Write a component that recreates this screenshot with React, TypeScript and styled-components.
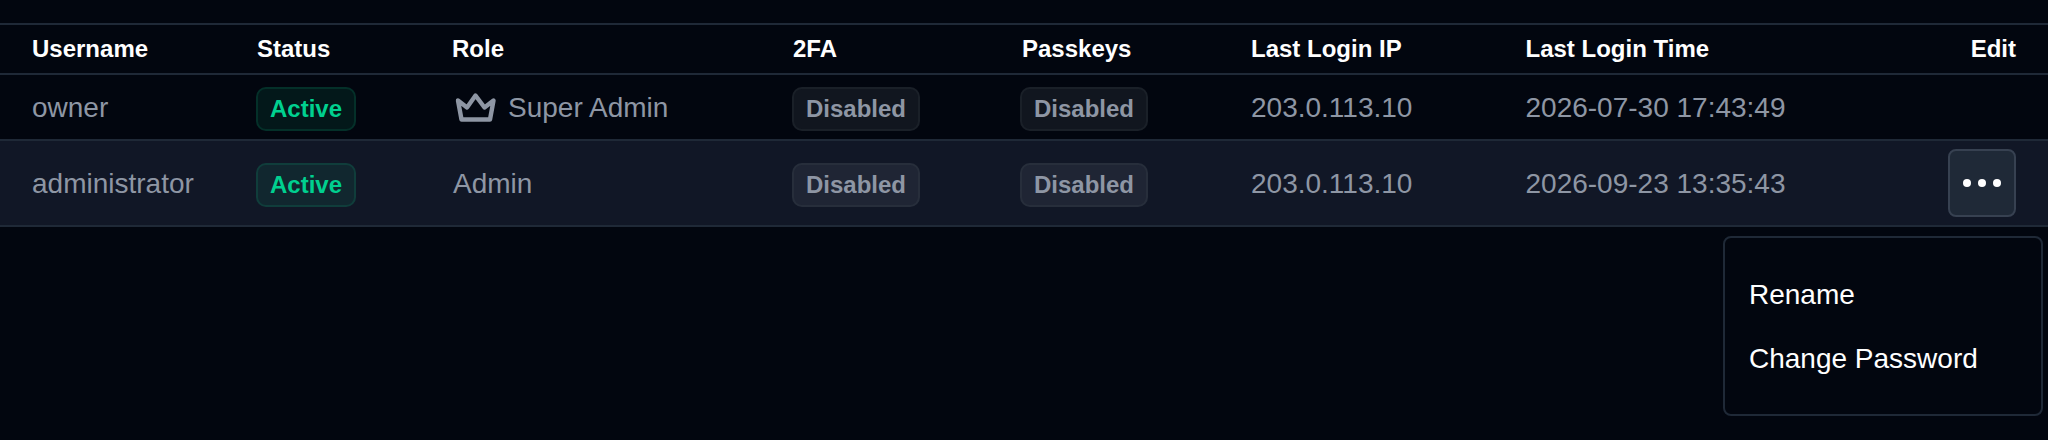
import React from "react";
import styled, { createGlobalStyle } from "styled-components";

const Global = createGlobalStyle`
  html, body { margin: 0; padding: 0; background: #02060f; }
  body { font-family: "Liberation Sans", Arial, sans-serif; }
`;

const Page = styled.div`
  position: relative;
  width: 2048px;
  height: 440px;
  padding-top: 23px;
  box-sizing: border-box;
  background: #02060f;
  overflow: hidden;
`;

const columns = "256px 195px 341px 228px 230px 274.5px 299.5px 1fr";

const Row = styled.div<{ $hl?: boolean; $h: number }>`
  display: grid;
  grid-template-columns: ${columns};
  align-items: center;
  height: ${(p) => p.$h}px;
  box-sizing: border-box;
  border-bottom: 2px solid #1f2937;
  background: ${(p) => (p.$hl ? "#111726" : "transparent")};
`;

const Head = styled(Row)`
  border-top: 2px solid #1f2937;
`;

const Th = styled.div<{ $pad: number; $right?: boolean }>`
  color: #ffffff;
  font-size: 24px;
  font-weight: 700;
  padding-left: ${(p) => p.$pad}px;
  padding-right: ${(p) => (p.$right ? "32px" : "0")};
  text-align: ${(p) => (p.$right ? "right" : "left")};
  white-space: nowrap;
`;

const Td = styled.div<{ $first?: boolean; $right?: boolean; $flush?: boolean }>`
  color: #8e96a4;
  font-size: 28px;
  padding-top: ${(p) => (p.$right ? "0" : "2px")};
  padding-left: ${(p) => (p.$first ? "32px" : p.$flush ? "0" : "1px")};
  padding-right: ${(p) => (p.$right ? "32px" : "0")};
  display: flex;
  align-items: center;
  justify-content: ${(p) => (p.$right ? "flex-end" : "flex-start")};
  white-space: nowrap;
`;

const RoleName = styled.span`
  padding-left: 1px;
`;

const Badge = styled.span<{ $green?: boolean }>`
  display: inline-flex;
  align-items: center;
  justify-content: center;
  height: 44px;
  margin-top: 2px;
  padding: 0 12px;
  box-sizing: border-box;
  border-radius: 10px;
  font-size: 24px;
  font-weight: 700;
  color: ${(p) => (p.$green ? "#00d08f" : "#8e96a4")};
  background: ${(p) => (p.$green ? "rgba(16,185,129,0.1)" : "rgba(156,163,175,0.1)")};
  border: 2px solid ${(p) => (p.$green ? "rgba(16,185,129,0.15)" : "rgba(156,163,175,0.07)")};
`;

const Crown = styled.svg`
  width: 44px;
  height: 44px;
  margin: 0 10px 0 3px;
  color: #8e96a4;
`;

const MoreButton = styled.button`
  width: 68px;
  height: 68px;
  padding: 0;
  display: flex;
  align-items: center;
  justify-content: center;
  gap: 7.2px;
  background: #1f2937;
  border: 2px solid #374151;
  border-radius: 8px;
`;

const Dot = styled.i`
  width: 8px;
  height: 8px;
  border-radius: 50%;
  background: #ffffff;
`;

const Menu = styled.div`
  position: absolute;
  left: 1723px;
  top: 236px;
  width: 320px;
  height: 180px;
  box-sizing: border-box;
  padding: 25px 24px;
  background: #02060f;
  border: 2px solid #1f2937;
  border-radius: 8px;
  display: flex;
  flex-direction: column;
`;

const MenuItem = styled.div`
  color: #ffffff;
  font-size: 28px;
  line-height: 64px;
  white-space: nowrap;
`;

const heads: [string, number][] = [
  ["Username", 32],
  ["Status", 1],
  ["Role", 1],
  ["2FA", 1],
  ["Passkeys", 2],
  ["Last Login IP", 1],
  ["Last Login Time", 1],
];

export default function App() {
  return (
    <>
      <Global />
      <Page>
        <Head $h={52}>
          {heads.map(([h, pad]) => (
            <Th key={h} $pad={pad}>{h}</Th>
          ))}
          <Th $pad={0} $right>Edit</Th>
        </Head>
        <Row $h={66}>
          <Td $first>owner</Td>
          <Td $flush><Badge $green>Active</Badge></Td>
          <Td $flush>
            <Crown viewBox="0 0 44 44" fill="none" stroke="currentColor" strokeWidth="4.4" strokeLinecap="round" strokeLinejoin="round">
              <path d="M21.5 9.5 L30.5 21.5 L39.5 14.5 L36 33.5 L7.5 33.5 L4 14.5 L13 21.5 Z" />
            </Crown>
            Super Admin
          </Td>
          <Td $flush><Badge>Disabled</Badge></Td>
          <Td $flush><Badge>Disabled</Badge></Td>
          <Td>203.0.113.10</Td>
          <Td>2026-07-30 17:43:49</Td>
          <Td $right />
        </Row>
        <Row $h={86} $hl>
          <Td $first>administrator</Td>
          <Td $flush><Badge $green>Active</Badge></Td>
          <Td><RoleName>Admin</RoleName></Td>
          <Td $flush><Badge>Disabled</Badge></Td>
          <Td $flush><Badge>Disabled</Badge></Td>
          <Td>203.0.113.10</Td>
          <Td>2026-09-23 13:35:43</Td>
          <Td $right>
            <MoreButton aria-label="More"><Dot /><Dot /><Dot /></MoreButton>
          </Td>
        </Row>
        <Menu>
          <MenuItem>Rename</MenuItem>
          <MenuItem>Change Password</MenuItem>
        </Menu>
      </Page>
    </>
  );
}
